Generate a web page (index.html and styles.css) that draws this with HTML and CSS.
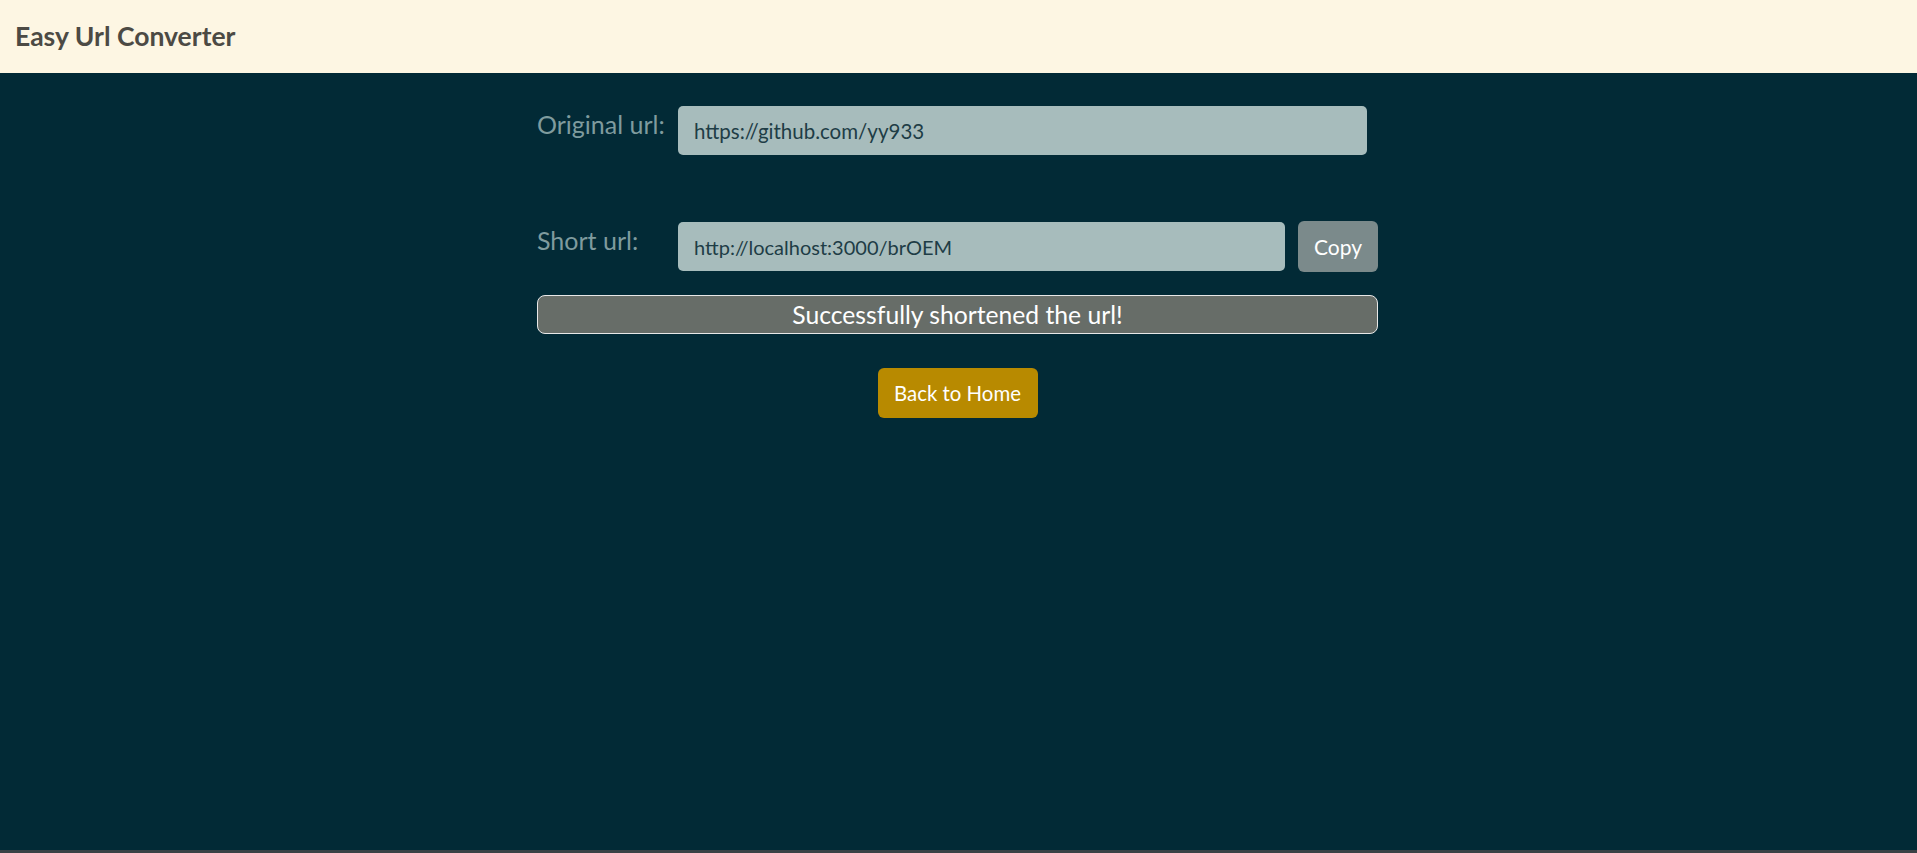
FILE: index.html
```html
<!DOCTYPE html>
<html lang="en">
<head>
<meta charset="utf-8">
<title>Easy Url Converter</title>
<link rel="stylesheet" href="styles.css">
</head>
<body>
<div class="page">
  <header class="navbar">
    <span class="brand">Easy Url Converter</span>
  </header>
  <main class="main">
    <div class="panel">
      <div class="row row-original">
        <label class="label">Original url:</label>
        <div class="field field-long">https://github.com/yy933</div>
      </div>
      <div class="row row-short">
        <label class="label">Short url:</label>
        <div class="field field-short">http://localhost:3000/brOEM</div>
        <button class="btn-copy">Copy</button>
      </div>
      <div class="alert">Successfully shortened the url!</div>
      <div class="actions">
        <button class="btn-home">Back to Home</button>
      </div>
    </div>
  </main>
</div>
</body>
</html>
```
FILE: styles.css
```css
* { box-sizing: border-box; }
html, body { margin: 0; padding: 0; }
body {
  background: #3a4145;
  font-family: Lato, "Noto Sans", sans-serif;
  height: 853px;
  overflow: hidden;
}
.page {
  height: 850px;
  display: flex;
  flex-direction: column;
  background: #022a36;
}
.navbar {
  height: 73px;
  background: #fdf6e3;
  display: flex;
  align-items: center;
  padding-left: 15px;
  padding-bottom: 2px;
  flex-shrink: 0;
}
.brand {
  font-weight: 700;
  font-size: 26.5px;
  color: #4c4a44;
}
.main {
  flex: 1;
  display: flex;
  justify-content: center;
  padding-right: 2px;
}
.panel {
  width: 841px;
  padding-top: 33px;
  display: flex;
  flex-direction: column;
}
.row {
  display: flex;
  align-items: flex-start;
}
.label {
  width: 141px;
  flex-shrink: 0;
  font-size: 25px;
  color: #7f9b9e;
  padding-top: 3px;
  line-height: 30px;
}
.field {
  height: 49px;
  background: #a7bcbc;
  border-radius: 5px;
  color: #1e3d46;
  font-size: 20.5px;
  display: flex;
  align-items: center;
  padding-left: 16px;
}
.field-long { width: 689px; }
.row-short { margin-top: 67px; }
.field-short { width: 607px; font-size: 20px; }
.btn-copy {
  margin-left: 13px;
  margin-top: -1px;
  width: 80px;
  height: 51px;
  border: none;
  border-radius: 6px;
  background: #7b8a8b;
  color: #fff;
  font-family: inherit;
  font-size: 21px;
}
.alert {
  margin-top: 23px;
  height: 39px;
  border: 1px solid #e8e8e8;
  border-radius: 8px;
  background: #676d68;
  color: #fff;
  font-size: 24.7px;
  display: flex;
  align-items: center;
  justify-content: center;
}
.actions {
  margin-top: 34px;
  display: flex;
  justify-content: center;
}
.btn-home {
  width: 160px;
  height: 50px;
  border: none;
  border-radius: 6px;
  background: #b88a00;
  color: #fff;
  font-family: inherit;
  font-size: 20.4px;
}
```
